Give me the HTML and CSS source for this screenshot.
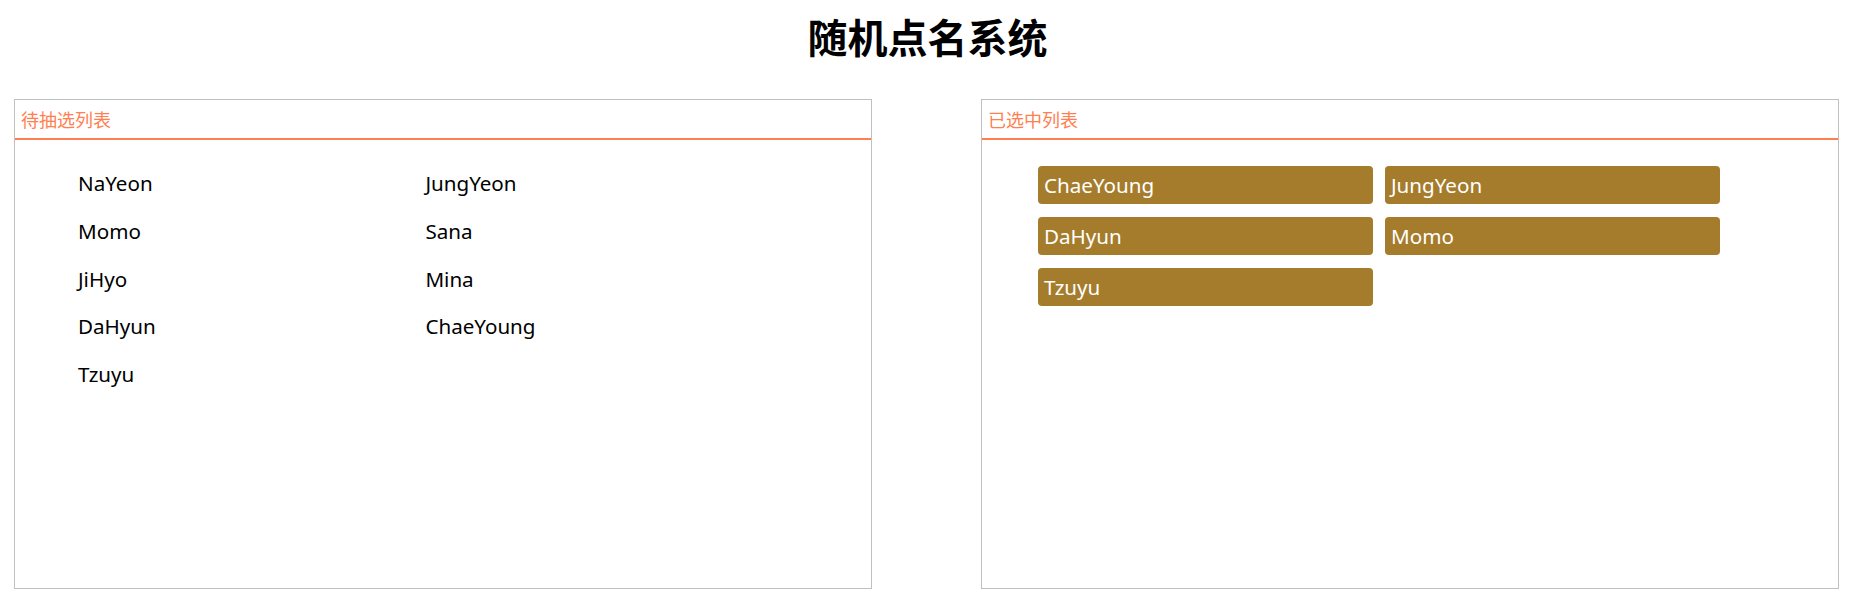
FILE: index.html
```html
<!DOCTYPE html>
<html lang="zh-CN">
<head>
<meta charset="utf-8">
<title>随机点名系统</title>
<link rel="stylesheet" href="styles.css">
</head>
<body>
<h1 class="title">随机点名系统</h1>
<div class="panels">
  <section class="panel">
    <div class="panel-head">待抽选列表</div>
    <ul class="pool">
      <li>NaYeon</li>
      <li>JungYeon</li>
      <li>Momo</li>
      <li>Sana</li>
      <li>JiHyo</li>
      <li>Mina</li>
      <li>DaHyun</li>
      <li>ChaeYoung</li>
      <li>Tzuyu</li>
    </ul>
  </section>
  <section class="panel">
    <div class="panel-head">已选中列表</div>
    <ul class="picked">
      <li>ChaeYoung</li>
      <li>JungYeon</li>
      <li>DaHyun</li>
      <li>Momo</li>
      <li>Tzuyu</li>
    </ul>
  </section>
</div>
</body>
</html>
```
FILE: styles.css
```css
html, body {
  margin: 0;
  padding: 0;
  background: #fff;
}
body {
  font-family: "Noto Sans", "Noto Sans CJK SC", sans-serif;
  color: #000;
}
.title {
  margin: 0 0 27px;
  height: 72px;
  line-height: 72px;
  text-align: center;
  font-size: 40px;
  font-weight: 700;
  font-family: "Noto Sans CJK SC", sans-serif;
}
.panels {
  display: flex;
  gap: 109px;
  padding: 0 14px;
}
.panel {
  width: 858px;
  height: 490px;
  box-sizing: border-box;
  border: 1px solid #c0c0c0;
}
.panel-head {
  height: 38px;
  line-height: 38px;
  padding-left: 6px;
  border-bottom: 2px solid #ff7f50;
  color: #ff7f50;
  font-size: 18px;
  font-family: "Noto Sans CJK SC", sans-serif;
}
.pool {
  list-style: none;
  margin: 0;
  padding: 20px 0 0 63px;
  display: grid;
  grid-template-columns: 347.4px 347.4px;
  grid-auto-rows: 47.75px;
  font-size: 20.6px;
  line-height: 47.75px;
}
.picked {
  list-style: none;
  margin: 0;
  padding: 26px 0 0 56px;
  display: grid;
  grid-template-columns: 335px 335px;
  gap: 13px 12px;
  font-size: 20.6px;
}
.picked li {
  height: 38px;
  line-height: 38px;
  padding: 0 6px;
  border-radius: 4px;
  background: #a57c2c;
  color: #fff;
}
```
